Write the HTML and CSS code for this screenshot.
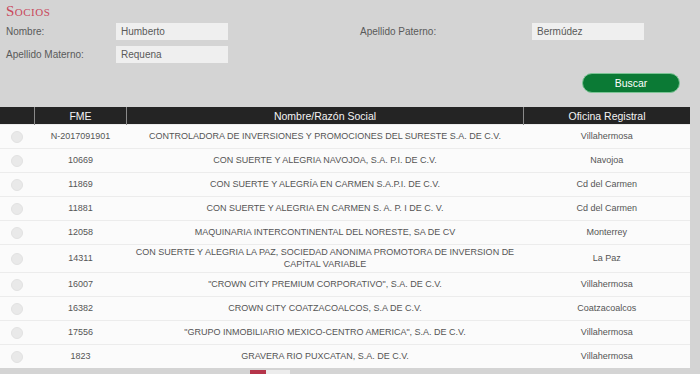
FILE: index.html
```html
<!DOCTYPE html>
<html lang="es">
<head>
    <meta charset="UTF-8">
    <title>Socios</title>
    <link rel="stylesheet" href="styles.css">
</head>
<body>
    <div class="search">
        <h2 class="title">Socios</h2>
        <div class="form-grid">
            <label class="lbl">Nombre:</label>
            <input class="txt" type="text" value="Humberto">
            <span></span>
            <label class="lbl">Apellido Paterno:</label>
            <input class="txt" type="text" value="Bermúdez">
            <label class="lbl">Apellido Materno:</label>
            <input class="txt" type="text" value="Requena">
        </div>
        <div class="actions">
            <button class="btn-buscar">Buscar</button>
        </div>
    </div>

    <table class="results">
        <thead>
            <tr>
                <th class="col-sel"></th>
                <th class="col-fme">FME</th>
                <th class="col-name">Nombre/Razón Social</th>
                <th class="col-office">Oficina Registral</th>
            </tr>
        </thead>
        <tbody>
            <tr><td><span class="radio"></span></td><td>N-2017091901</td><td class="name">CONTROLADORA DE INVERSIONES Y PROMOCIONES DEL SURESTE S.A. DE C.V.</td><td>Villahermosa</td></tr>
            <tr><td><span class="radio"></span></td><td>10669</td><td class="name">CON SUERTE Y ALEGRIA NAVOJOA, S.A. P.I. DE C.V.</td><td>Navojoa</td></tr>
            <tr><td><span class="radio"></span></td><td>11869</td><td class="name">CON SUERTE Y ALEGRÍA EN CARMEN S.A.P.I. DE C.V.</td><td>Cd del Carmen</td></tr>
            <tr><td><span class="radio"></span></td><td>11881</td><td class="name">CON SUERTE Y ALEGRIA EN CARMEN S. A. P. I DE C. V.</td><td>Cd del Carmen</td></tr>
            <tr><td><span class="radio"></span></td><td>12058</td><td class="name">MAQUINARIA INTERCONTINENTAL DEL NORESTE, SA DE CV</td><td>Monterrey</td></tr>
            <tr class="tall"><td><span class="radio"></span></td><td>14311</td><td class="name nowrap">CON SUERTE Y ALEGRIA LA PAZ, SOCIEDAD ANONIMA PROMOTORA DE INVERSION DE<br>CAPÍTAL VARIABLE</td><td>La Paz</td></tr>
            <tr><td><span class="radio"></span></td><td>16007</td><td class="name">"CROWN CITY PREMIUM CORPORATIVO", S.A. DE C.V.</td><td>Villahermosa</td></tr>
            <tr><td><span class="radio"></span></td><td>16382</td><td class="name">CROWN CITY COATZACOALCOS, S.A DE C.V.</td><td>Coatzacoalcos</td></tr>
            <tr><td><span class="radio"></span></td><td>17556</td><td class="name">"GRUPO INMOBILIARIO MEXICO-CENTRO AMERICA", S.A. DE C.V.</td><td>Villahermosa</td></tr>
            <tr><td><span class="radio"></span></td><td>1823</td><td class="name">GRAVERA RIO PUXCATAN, S.A. DE C.V.</td><td>Villahermosa</td></tr>
        </tbody>
    </table>

    <div class="pager">
        <span class="page active"></span>
        <span class="page"></span>
    </div>
</body>
</html>
```

FILE: styles.css
```css
body {
    margin: 0;
    background-color: #d4d4d4;
    font-family: "Liberation Sans", Arial, sans-serif;
    color: #555;
    overflow: hidden;
}
.search {
    padding: 3px 20px 0 6px;
}
.title {
    margin: 0;
    font-family: "Liberation Serif", serif;
    font-variant: small-caps;
    font-weight: normal;
    font-size: 15px;
    line-height: 16px;
    letter-spacing: 0.5px;
    color: #c9485c;
}
.form-grid {
    display: grid;
    grid-template-columns: 110px 112px 132px 172px 112px;
    grid-auto-rows: 17px;
    row-gap: 6px;
    margin-top: 4px;
    align-items: center;
}
.lbl {
    font-size: 10px;
    color: #5a5a5a;
}
.txt {
    height: 17px;
    box-sizing: border-box;
    border: none;
    background-color: #efefef;
    padding: 0 5px;
    font-family: "Liberation Sans", Arial, sans-serif;
    font-size: 10px;
    color: #5a5a5a;
    outline: none;
}
.actions {
    display: flex;
    justify-content: flex-end;
    margin-top: 10px;
}
.btn-buscar {
    width: 98px;
    height: 20px;
    border: 1px solid #7cc495;
    border-radius: 10px;
    background-color: #0b7a35;
    color: #fff;
    font-family: "Liberation Sans", Arial, sans-serif;
    font-size: 10.5px;
    cursor: pointer;
}
.results {
    margin-top: 14px;
    width: 690px;
    border-collapse: collapse;
    background-color: #fbfbfb;
    font-size: 9px;
    color: #555;
    table-layout: fixed;
}
.results th {
    height: 17px;
    padding: 0;
    background-color: #242424;
    color: #f4f4f4;
    font-weight: normal;
    font-size: 10.5px;
    border-left: 1px solid #8a8a8a;
}
.results th:first-child {
    border-left: none;
}
.col-sel { width: 34px; }
.col-fme { width: 91px; }
.col-name { width: 396px; }
.results td {
    height: 23px;
    padding: 0 6px;
    text-align: center;
    border-top: 1px solid #ececec;
    line-height: 11.5px;
}
.results td.name {
    padding: 0 1px;
}
.results td.nowrap {
    white-space: nowrap;
}
.results tr.tall td {
    height: 27px;
}
.results td:first-child {
    padding: 0;
}
.radio {
    display: block;
    width: 12px;
    height: 12px;
    margin-left: 11px;
    border-radius: 50%;
    background-color: #e9e9e9;
    border: 1px solid #e2e2e2;
    box-sizing: border-box;
}
.pager {
    display: flex;
    padding: 2px 0 0 250px;
}
.page {
    width: 16px;
    height: 16px;
    background-color: #ececec;
}
.page.active {
    background-color: #b5354a;
}
.page + .page {
    width: 24px;
}
```
